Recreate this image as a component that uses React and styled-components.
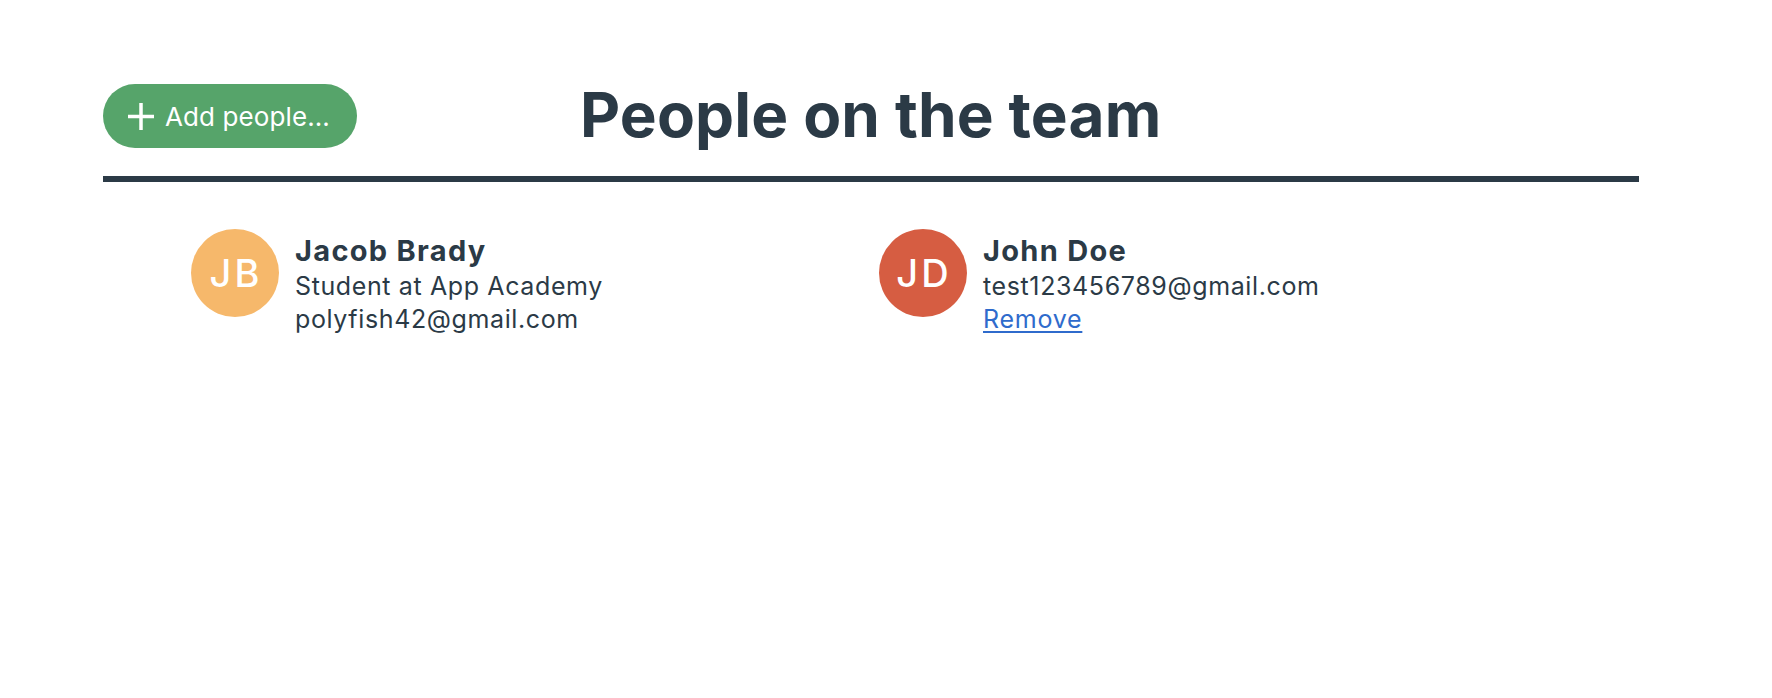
import React from "react";
import styled, { createGlobalStyle } from "styled-components";

const GlobalStyle = createGlobalStyle`
  html, body {
    margin: 0;
    padding: 0;
    background: #ffffff;
  }
  body {
    font-family: Inter, "Open Sans", "Liberation Sans", sans-serif;
    color: #2b3a46;
  }
`;

const Page = styled.div`
  width: 1536px;
  padding-left: 103px;
  padding-top: 84px;
`;

const Header = styled.header`
  display: flex;
  align-items: flex-start;
  height: 92px;
`;

const AddButton = styled.button`
  display: flex;
  align-items: center;
  gap: 11px;
  height: 64px;
  width: 254px;
  padding: 0 0 0 25px;
  border: none;
  border-radius: 32px;
  background: #56a46a;
  color: #ffffff;
  font-family: Inter, "Liberation Sans", sans-serif;
  font-size: 26px;
  font-weight: 400;
  letter-spacing: 0.1px;
  cursor: pointer;
`;

const Title = styled.h1`
  margin: 0 0 0 223px;
  font-size: 62px;
  line-height: 62px;
  font-weight: 700;
  letter-spacing: 0.15px;
  color: #2b3a46;
`;

const Divider = styled.hr`
  margin: 0;
  border: none;
  height: 6px;
  background: #2b3a46;
`;

const Cards = styled.div`
  display: grid;
  grid-template-columns: 688px 688px;
  padding-left: 88px;
  padding-top: 47px;
`;

const Card = styled.div`
  display: flex;
  align-items: flex-start;
  gap: 16px;
`;

const Avatar = styled.div`
  width: 88px;
  height: 88px;
  border-radius: 50%;
  flex: none;
  display: flex;
  align-items: center;
  justify-content: center;
  padding-left: 2px;
  box-sizing: border-box;
  background: ${(p) => p.$color};
  color: #ffffff;
  font-size: 38px;
  font-weight: 500;
  letter-spacing: 3px;
`;

const Info = styled.div`
  display: flex;
  flex-direction: column;
  padding-top: 3px;
`;

const Name = styled.div`
  font-size: 29px;
  line-height: 38px;
  font-weight: 700;
  letter-spacing: 1.3px;
  color: #2b3a46;
`;

const Line = styled.div`
  font-size: 25px;
  line-height: 33px;
  font-weight: 400;
  letter-spacing: 0.62px;
  color: #2b3a46;
`;

const RemoveLink = styled.a`
  font-size: 25px;
  line-height: 33px;
  letter-spacing: 0.75px;
  color: #2f6bcc;
  text-decoration: underline;
  text-underline-offset: 3px;
  cursor: pointer;
`;

const PlusIcon = () => (
  <svg width="26" height="27" viewBox="0 0 26 27" aria-hidden="true">
    <path d="M13 0v27M0 13.5h26" stroke="#ffffff" strokeWidth="3.5" fill="none" />
  </svg>
);

const people = [
  {
    initials: "JB",
    color: "#f6b86b",
    name: "Jacob Brady",
    lines: ["Student at App Academy", "polyfish42@gmail.com"],
    removable: false,
  },
  {
    initials: "JD",
    color: "#d65d42",
    name: "John Doe",
    lines: ["test123456789@gmail.com"],
    removable: true,
  },
];

export default function App() {
  return (
    <>
      <GlobalStyle />
      <Page>
        <Header>
          <AddButton>
            <PlusIcon />
            Add people...
          </AddButton>
          <Title>People on the team</Title>
        </Header>
        <Divider />
        <Cards>
          {people.map((p) => (
            <Card key={p.name}>
              <Avatar $color={p.color}>{p.initials}</Avatar>
              <Info>
                <Name>{p.name}</Name>
                {p.lines.map((l) => (
                  <Line key={l}>{l}</Line>
                ))}
                {p.removable && <RemoveLink>Remove</RemoveLink>}
              </Info>
            </Card>
          ))}
        </Cards>
      </Page>
    </>
  );
}
